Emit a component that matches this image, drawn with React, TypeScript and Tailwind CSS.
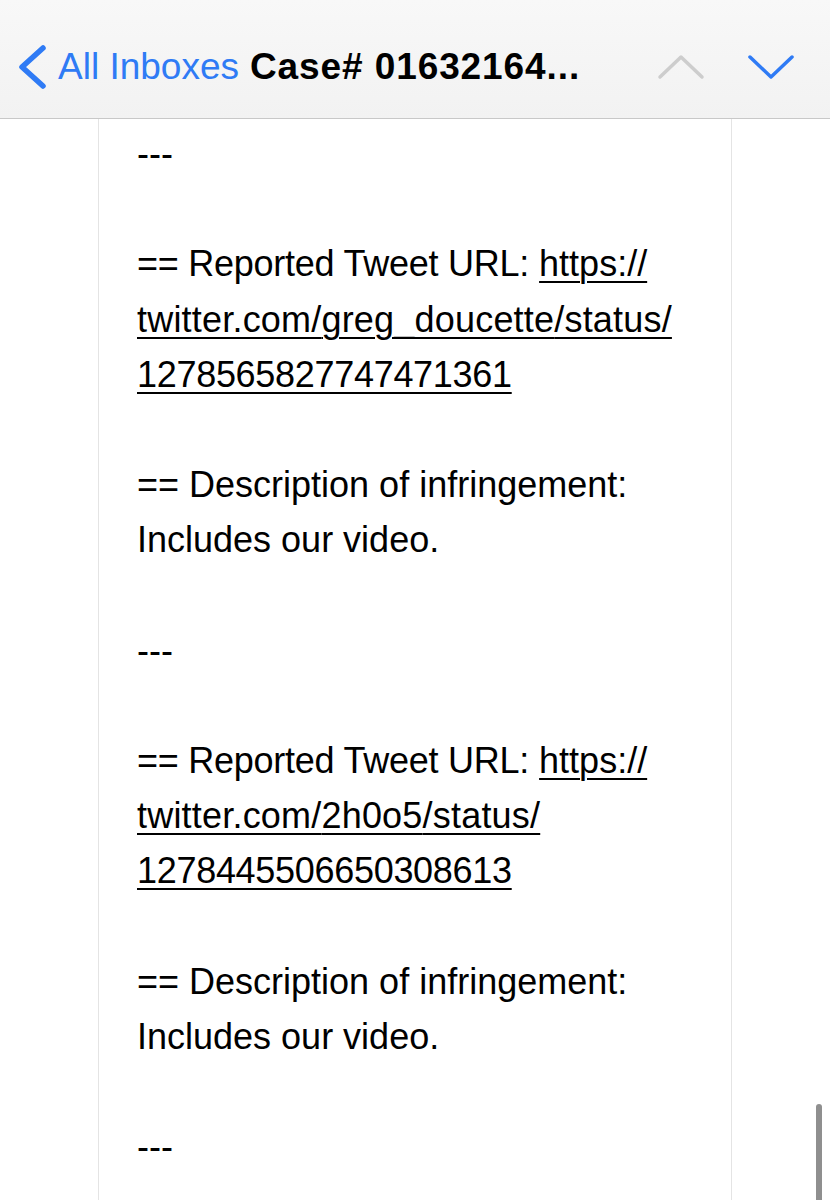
const Line = ({ children }: { children?: React.ReactNode }) => (
  <div className="h-[55.2px] whitespace-nowrap">{children}</div>
);

const Link = ({ children, className }: { children: React.ReactNode; className?: string }) => (
  <span className={`underline decoration-[1.5px] underline-offset-[5px] ${className ?? ""}`}>{children}</span>
);

const Report = ({ user, id }: { user: string; id: string }) => (
  <>
    <Line>
      <span className="tracking-[-0.25px]">== Reported Tweet URL:</span> <Link>https://</Link>
    </Line>
    <Line>
      <Link className="tracking-[0.2px]">twitter.com/{user}/status/</Link>
    </Line>
    <Line>
      <Link className="tracking-[-0.3px]">{id}</Link>
    </Line>
    <Line />
    <Line>== Description of infringement:</Line>
    <Line>Includes our video.</Line>
    <Line />
  </>
);

const App = () => {
  return (
    <div className="relative h-[1200px] w-[830px] overflow-hidden bg-white font-['Liberation_Sans',Arial,sans-serif] text-black">
      <header className="flex h-[119px] items-center border-b border-[#c8c8c8] bg-gradient-to-b from-[#f8f8f8] to-[#f2f2f2] pt-[16px]">
        <svg width="32" height="46" viewBox="0 0 32 46" className="ml-[16px] shrink-0">
          <polyline
            points="27,4 6,23 27,42"
            fill="none"
            stroke="#2f7bf5"
            strokeWidth="5.5"
            strokeLinecap="round"
            strokeLinejoin="round"
          />
        </svg>
        <span className="ml-[10px] text-[37px] text-[#2f7bf5]">All Inboxes</span>
        <span className="ml-[11px] text-[37px] font-bold tracking-[0.9px]">Case# 01632164...</span>
        <svg width="48" height="28" viewBox="0 0 48 28" className="ml-auto shrink-0">
          <polyline
            points="3,24 24,4 45,24"
            fill="none"
            stroke="#cdcdcd"
            strokeWidth="3.5"
            strokeLinecap="round"
            strokeLinejoin="round"
          />
        </svg>
        <svg width="48" height="28" viewBox="0 0 48 28" className="ml-[42px] mr-[35px] shrink-0">
          <polyline
            points="3,4 24,24 45,4"
            fill="none"
            stroke="#2f7bf5"
            strokeWidth="3.5"
            strokeLinecap="round"
            strokeLinejoin="round"
          />
        </svg>
      </header>

      <div className="ml-[98px] h-full w-[634px] border-x-[1.5px] border-[#e4e4e4] pl-[38px] pt-[7px] text-[36px] leading-[55.2px]">
        <Line>---</Line>
        <Line />
        <Report user="greg_doucette" id="1278565827747471361" />
        <Line>---</Line>
        <Line />
        <Report user="2h0o5" id="1278445506650308613" />
        <Line>---</Line>
      </div>

      <div className="absolute bottom-0 right-[8px] h-[96px] w-[6px] rounded-t-full bg-[#8f8f8f]" />
    </div>
  );
};

export default App;
